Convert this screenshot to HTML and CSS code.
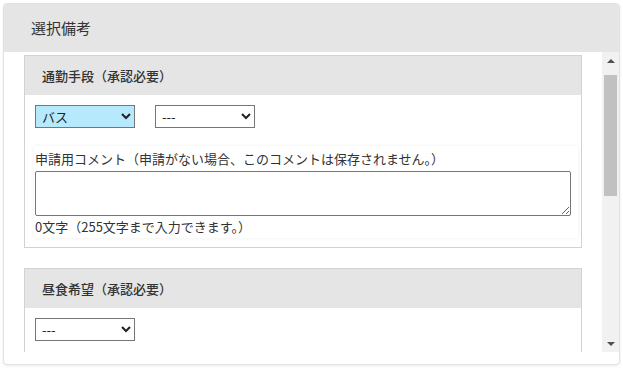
FILE: index.html
```html
<!DOCTYPE html>
<html lang="ja">
<head>
  <meta charset="UTF-8">
  <meta name="viewport" content="width=device-width, initial-scale=1">
  <title>選択備考</title>
  <link rel="stylesheet" href="styles.css">
</head>
<body>
  <div class="remarks-card">
    <div class="remarks-header">選択備考</div>

    <div class="remarks-body">
      <div class="remarks-scroll">

        <div class="item-box">
          <div class="item-header">通勤手段（承認必要）</div>
          <div class="item-content">
            <div class="select-row">
              <select class="sel sel-active">
                <option>バス</option>
                <option>電車</option>
                <option>自転車</option>
              </select>
              <select class="sel">
                <option>---</option>
              </select>
            </div>
            <div class="comment-box">
              <div class="comment-label">申請用コメント（申請がない場合、このコメントは保存されません。）</div>
              <textarea class="comment-input"></textarea>
              <div class="comment-count">0文字（255文字まで入力できます。）</div>
            </div>
          </div>
        </div>

        <div class="item-box item-open">
          <div class="item-header">昼食希望（承認必要）</div>
          <div class="item-content">
            <div class="select-row">
              <select class="sel">
                <option>---</option>
                <option>希望する</option>
                <option>希望しない</option>
              </select>
            </div>
          </div>
        </div>

      </div>

      <!-- スクロールバー -->
      <div class="scrollbar">
        <div class="sb-btn"><span class="arrow-up"></span></div>
        <div class="sb-track"><div class="sb-thumb"></div></div>
        <div class="sb-btn"><span class="arrow-down"></span></div>
      </div>
    </div>
  </div>
</body>
</html>
```

FILE: styles.css
```css
/* 全体 */
body {
  font-family: "Noto Sans CJK JP", "Noto Sans", sans-serif;
  margin: 0;
  padding: 3px;
  color: #333;
  background: #fff;
}
.remarks-card {
  border: 1px solid #e2e2e2;
  border-radius: 4px;
  box-shadow: 0 1px 3px rgba(0, 0, 0, 0.08);
  background: #fff;
  overflow: hidden;
  padding-bottom: 12px;
}
.remarks-header {
  height: 48px;
  line-height: 48px;
  padding-left: 27px;
  background: #e5e5e5;
  font-size: 15px;
}
/* スクロール領域 */
.remarks-body {
  display: flex;
  height: 300px;
}
.remarks-scroll {
  flex: 1;
  min-width: 0;
  overflow: hidden;
  padding: 3px 20px 0 20px;
}
.scrollbar {
  width: 17px;
  background: #f1f1f1;
  display: flex;
  flex-direction: column;
}
.sb-btn {
  height: 17px;
  display: flex;
  align-items: center;
  justify-content: center;
}
.arrow-up, .arrow-down {
  width: 0;
  height: 0;
  border-left: 4px solid transparent;
  border-right: 4px solid transparent;
}
.arrow-up { border-bottom: 4px solid #505050; }
.arrow-down { border-top: 4px solid #505050; }
.sb-track {
  flex: 1;
  padding: 6px 2px 0 2px;
}
.sb-thumb {
  height: 121px;
  background: #c1c1c1;
}
.item-box {
  border: 1px solid #cfd3d8;
  margin-bottom: 20px;
}
.item-open {
  min-height: 200px;
}
.item-header {
  height: 39px;
  line-height: 39px;
  padding-left: 17px;
  background: #e5e5e5;
  font-size: 13px;
  font-weight: 500;
}
.item-content {
  padding: 10px 3px 9px 9px;
}
.select-row {
  display: flex;
  gap: 20px;
  margin-left: 1px;
}
.sel {
  width: 100px;
  height: 23px;
  font-family: inherit;
  font-size: 13px;
  color: #222;
  border: 1px solid #767676;
  border-radius: 0;
  background: #fff;
  padding: 0 2px;
}
.sel-active {
  background: #b6e9fc;
}
/* コメント欄 */
.comment-box {
  margin-top: 18px;
  padding: 2px 4px 1px 1px;
  box-shadow: 0 0 4px rgba(0, 0, 0, 0.07);
  font-size: 13px;
}
.comment-label {
  line-height: 21px;
}
.comment-input {
  display: block;
  box-sizing: border-box;
  width: 536px;
  height: 45px;
  margin-top: 2px;
  border: 1px solid #767676;
  border-radius: 2px;
  resize: vertical;
}
.comment-count {
  line-height: 21px;
}
```
